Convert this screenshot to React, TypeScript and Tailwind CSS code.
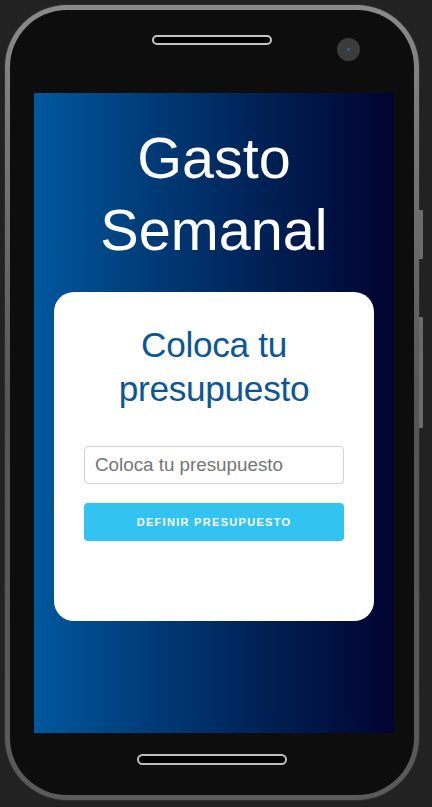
import React from 'react'

const font = "font-['Liberation_Sans',Arial,sans-serif]"

const Phone: React.FC<{ children: React.ReactNode }> = ({ children }) => {
  return (
    <div className="relative ml-[5px] pt-[5px]">
      {/* side buttons */}
      <div className="absolute left-[414px] top-[210px] w-[4px] h-[49px] bg-[#6b6b6b] rounded-r-[1px]" />
      <div className="absolute left-[414px] top-[317px] w-[4px] h-[111px] bg-[#6b6b6b] rounded-r-[1px]" />

      {/* rim */}
      <div className="w-[414px] h-[795px] rounded-[62px] p-[5px] bg-gradient-to-b from-[#8a8a8a] via-[#555555] to-[#5a5a5a] shadow-[0_0_0_1px_#2c2c2c]">
        <div className="relative w-full h-full rounded-[57px] bg-[#0d0d0d] flex flex-col items-center pt-[25px]">
          {/* camera */}
          <div className="absolute left-[327px] top-[28px] w-[23px] h-[23px] rounded-full bg-[#3b3b3b] flex items-center justify-center">
            <div className="w-[3px] h-[3px] rounded-full bg-[#1d6fb3]" />
          </div>

          <div className="w-[120px] h-[10px] rounded-full border-2 border-[#c4c4c4] bg-black" />

          <div className="self-start ml-[24px] mt-[48px] w-[360px] h-[640px] overflow-hidden">
            {children}
          </div>

          <div className="mt-[21px] w-[150px] h-[11px] rounded-full border-2 border-[#bdbdbd] bg-black" />
        </div>
      </div>
    </div>
  )
}

export default function App() {
  return (
    <div className={`w-[432px] h-[807px] bg-[#222222] overflow-hidden ${font}`}>
      <Phone>
        <div className="w-full h-full bg-gradient-to-r from-[#00589d] to-[#000430] flex flex-col items-center pt-[29px]">
          <h1 className="text-white text-center text-[57.6px] leading-[72px] font-normal">
            Gasto Semanal
          </h1>

          {/* tarjeta del presupuesto */}
          <div className="mt-[26px] w-[320px] bg-white rounded-[20px] px-[30px] pt-[31px] pb-[80px] flex flex-col">
            <h2 className="text-[#0a5697] text-center text-[35.2px] leading-[44px] font-normal tracking-[-0.3px]">
              Coloca tu presupuesto
            </h2>

            <input
              type="number"
              placeholder="Coloca tu presupuesto"
              className="mt-[35px] w-full h-[38px] border border-[#d1d1d1] rounded-[4px] px-[10px] text-[18.8px] text-[#333] placeholder:text-[#757575] bg-white outline-none"
            />

            <button className="mt-[19px] w-full h-[38px] rounded-[4px] bg-[#33c3f0] text-white text-[11px] font-bold uppercase tracking-[1.3px]">
              Definir presupuesto
            </button>
          </div>
        </div>
      </Phone>
    </div>
  )
}
